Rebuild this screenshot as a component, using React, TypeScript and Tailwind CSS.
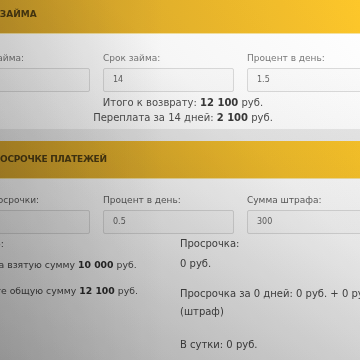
import React from "react";

type Field = { label: string; value: string };

function Fields({ fields, labelColor }: { fields: Field[]; labelColor: string }) {
  return (
    <div className="grid grid-cols-[131px_131px_131px] gap-x-[13px]">
      {fields.map((f, i) => (
        <div key={i}>
          <div className={`h-3 text-[9px] leading-3 whitespace-nowrap ${labelColor}`}>{f.label}</div>
          <div className="mt-1 h-6 rounded-[2px] border border-[#dddddd] bg-[#fcfcfc] pl-[9px] text-[8px] leading-[22px] text-[#666666]">
            {f.value}
          </div>
        </div>
      ))}
    </div>
  );
}

function Header({ title, shift }: { title: string; shift: string }) {
  return (
    <div className="h-[38px] shrink-0 border-b border-[#f6e3a0] bg-linear-to-r from-[#d9a72d] to-[#fdc72a] flex items-center">
      <span className={`text-[9px] font-bold text-[#4d3c12] whitespace-nowrap ${shift}`}>{title}</span>
    </div>
  );
}

export default function App() {
  return (
    <div
      className="relative flex flex-col w-[360px] h-[360px] overflow-hidden bg-[#ececec] text-[#4a4a4a]"
      style={{ fontFamily: '"DejaVu Sans", Verdana, sans-serif' }}
    >
      <div className="mt-[-4px] shrink-0 bg-white">
        <Header title="РАСЧЕТ ЗАЙМА" shift="ml-[-43px]" />
        <div className="ml-[-41px] pt-[18px] pb-[4px]">
          <Fields
            labelColor="text-[#7a7a7a]"
            fields={[
              { label: "Сумма займа:", value: "10000" },
              { label: "Срок займа:", value: "14" },
              { label: "Процент в день:", value: "1.5" },
            ]}
          />
          <div className="mt-[3px] w-[448px] text-center text-[10px] leading-[15px] text-[#505050]">
            <p>
              Итого к возврату: <b className="text-[#3a3a3a]">12 100</b> руб.
            </p>
            <p>
              Переплата за 14 дней: <b className="text-[#3a3a3a]">2 100</b> руб.
            </p>
          </div>
        </div>
      </div>

      <div className="mt-[12px] flex-1 bg-white">
        <Header title="ПРИ ПРОСРОЧКЕ ПЛАТЕЖЕЙ" shift="ml-[-37px] tracking-[-0.3px]" />
        <div className="ml-[-41px] pt-[15px]">
          <Fields
            labelColor="text-[#5e5e5e]"
            fields={[
              { label: "Дней просрочки:", value: "0" },
              { label: "Процент в день:", value: "0.5" },
              { label: "Сумма штрафа:", value: "300" },
            ]}
          />
          <div className="grid grid-cols-[221px_200px] text-[#4a4a4a]">
            <div className="whitespace-nowrap text-[9.3px] leading-[20px]">
              <p className="ml-[13px]">Итого:</p>
              <p className="mt-[1px] ml-[-19px]">
                Проценты на взятую сумму <b className="text-[#2e2e2e]">10 000</b> руб.
              </p>
              <p className="mt-[6px] ml-[-27px]">
                Итого к оплате общую сумму <b className="text-[#2e2e2e]">12 100</b> руб.
              </p>
            </div>
            <div className="text-[10px] leading-[20px]">
              <p>Просрочка:</p>
              <p>0 руб.</p>
              <p className="mt-[11px] leading-[18px]">Просрочка за 0 дней: 0 руб. + 0 руб. (штраф)</p>
              <p className="mt-[14px]">В сутки: 0 руб.</p>
            </div>
          </div>
        </div>
      </div>

      <div className="pointer-events-none absolute inset-0 mix-blend-multiply bg-[linear-gradient(to_bottom_left,#ffffff_0%,#f6f6f6_35%,#b8b8b8_100%)]" />
      <div className="pointer-events-none absolute inset-0 mix-blend-multiply bg-[linear-gradient(to_bottom,#ffffff_20%,#e4e4e4_100%)]" />
      <div className="pointer-events-none absolute inset-0 mix-blend-multiply bg-[linear-gradient(to_right,#e6e6e6_0%,#ffffff_45%)]" />
    </div>
  );
}
